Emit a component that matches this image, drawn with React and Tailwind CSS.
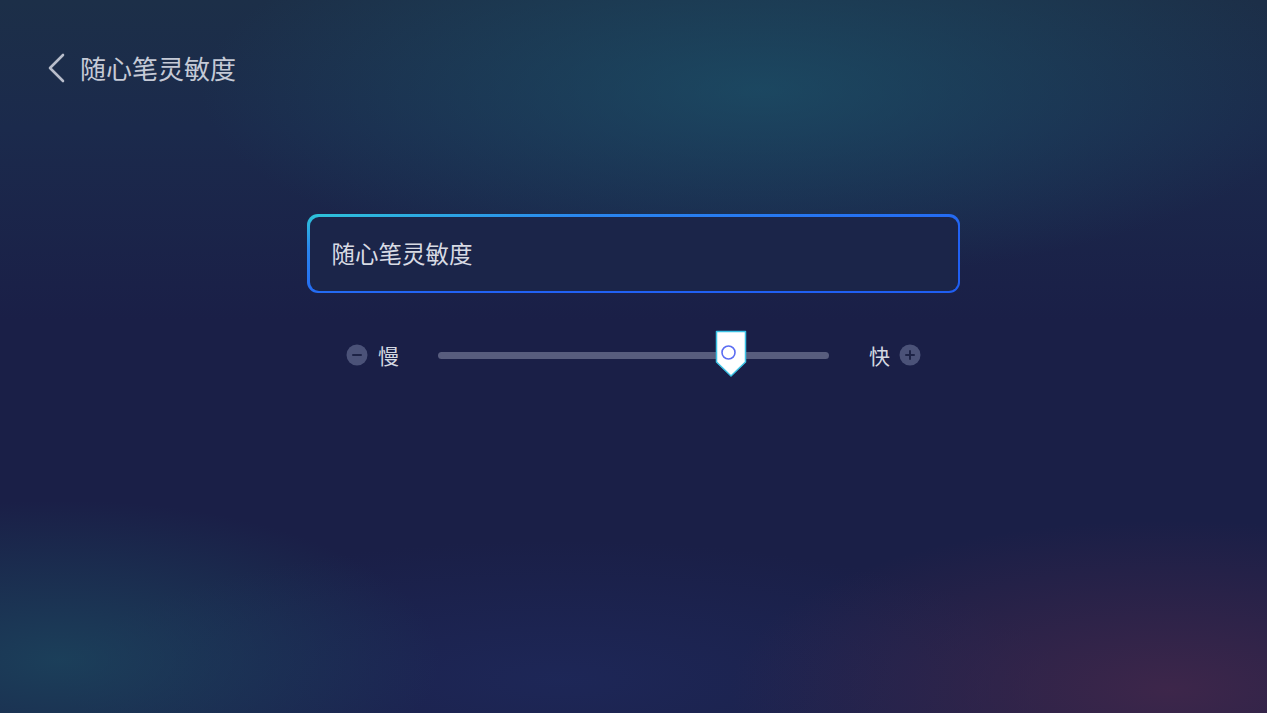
import React from "react";

const ThumbIcon = () => (
  <svg width="32" height="48" viewBox="0 0 32 48">
    <path
      d="M1.5 1.5 H30.5 V32 L16 46 L1.5 32 Z"
      fill="#ffffff"
      stroke="#3cc4e6"
      strokeWidth="1.5"
      strokeLinejoin="round"
    />
    <circle cx="13.5" cy="22.5" r="6.5" fill="none" stroke="#5b6df2" strokeWidth="1.6" />
  </svg>
);

const RoundBtn = ({ plus }) => (
  <svg width="22" height="22" viewBox="0 0 22 22">
    <circle cx="11" cy="11" r="10.5" fill="#4b5278" />
    <rect x="6" y="10" width="10" height="2" rx="1" fill="#1d2346" />
    {plus && <rect x="10" y="6" width="2" height="10" rx="1" fill="#1d2346" />}
  </svg>
);

export default function App() {
  const value = 0.75; // slider position

  return (
    <div
      className="relative h-[713px] w-full overflow-hidden bg-[#1a1f47] text-[#cfd3de] [font-family:'Noto_Sans_CJK_SC','Noto_Sans',sans-serif] bg-[radial-gradient(ellipse_560px_190px_at_760px_90px,rgba(28,88,110,0.62),transparent),radial-gradient(ellipse_380px_160px_at_60px_660px,rgba(28,80,100,0.65),transparent),radial-gradient(ellipse_440px_170px_at_1170px_690px,rgba(70,40,75,0.8),transparent),radial-gradient(ellipse_500px_140px_at_560px_680px,rgba(32,45,100,0.55),transparent),linear-gradient(to_bottom,#1c2f48_0%,#1b2a4c_18%,#1a1f47_45%,#1a1f47_100%)]"
    >
      {/* header */}
      <div className="flex items-center gap-[14px] pl-[46px] pt-[52px]">
        <svg width="20" height="32" viewBox="0 0 20 32">
          <path
            d="M17 3 L4 16 L17 29"
            fill="none"
            stroke="#b8bdcb"
            strokeWidth="2.6"
            strokeLinecap="round"
            strokeLinejoin="round"
          />
        </svg>
        <h1 className="text-[26px] leading-[32px] text-[#c5cad6]">随心笔灵敏度</h1>
      </div>

      {/* content */}
      <div className="mx-auto mt-[130px] w-[653px]">
        <div className="rounded-[11px] bg-[linear-gradient(to_bottom_right,#2ec6d8_0%,#2a86ee_22%,#2262f4_60%,#1f5ef2_100%)] p-[2.5px]">
          <div className="flex h-[74px] items-center rounded-[9px] bg-[#1b2549] pl-[22px] text-[23.5px] text-[#d8dbe4]">
            随心笔灵敏度
          </div>
        </div>

        <div className="mt-[38px] flex h-[48px] items-center pl-[39px]">
          <RoundBtn />
          <span className="ml-[10px] text-[21px] leading-none text-[#d4d8e2]">慢</span>
          <div className="relative ml-[39px] h-[7px] w-[391px] rounded-full bg-[#585d7e]">
            <div
              className="absolute top-1/2 -translate-y-[25px]"
              style={{ left: `${value * 391 - 16}px` }}
            >
              <ThumbIcon />
            </div>
          </div>
          <span className="ml-[40px] text-[21px] leading-none text-[#d4d8e2]">快</span>
          <span className="ml-[9px] flex">
            <RoundBtn plus />
          </span>
        </div>
      </div>
    </div>
  );
}
